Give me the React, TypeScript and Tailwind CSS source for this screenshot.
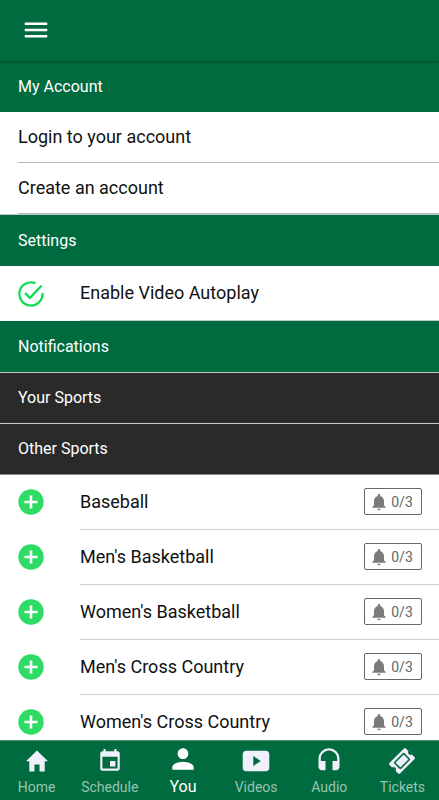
import React, { useState } from "react";
import { MdEvent, MdHeadset, MdMenu, MdNotifications, MdPerson } from "react-icons/md";

const sports = [
  "Baseball",
  "Men's Basketball",
  "Women's Basketball",
  "Men's Cross Country",
  "Women's Cross Country",
];

const HomeIcon = () => (
  <svg viewBox="0 0 26 26" className="size-[26px]" fill="currentColor" aria-hidden="true">
    <path d="M10.5 23.5v-7h5v7h5.2V13.300H24L13 2.500 2 13.300h3.300v10.200z" />
  </svg>
);

const VideoIcon = () => (
  <svg viewBox="0 0 28 24" className="h-6 w-7" fill="currentColor" aria-hidden="true">
    <path
      fillRule="evenodd"
      d="M4.5 1.8h19a3.8 3.8 0 0 1 3.8 3.8v12.9a3.8 3.8 0 0 1-3.8 3.8h-19a3.8 3.8 0 0 1-3.8-3.8V5.6a3.8 3.8 0 0 1 3.8-3.8zM11.3 7v10l7.4-5z"
    />
  </svg>
);

const TicketIcon = () => (
  <svg viewBox="0 0 28 28" className="size-7" aria-hidden="true">
    <g transform="rotate(-45 14 14)">
      <path
        fill="currentColor"
        d="M4 6.5h20a1.6 1.6 0 0 1 1.6 1.6v3.4a2.6 2.6 0 0 0 0 5v3.4a1.6 1.6 0 0 1-1.6 1.6H4a1.6 1.6 0 0 1-1.6-1.6v-3.4a2.6 2.6 0 0 0 0-5V8.1A1.6 1.6 0 0 1 4 6.5z"
      />
      <rect x="7.5" y="9.8" width="13" height="8.4" rx="0.6" fill="none" stroke="#006b3f" strokeWidth="1.5" />
    </g>
  </svg>
);

const tabs = [
  { label: "Home", icon: <HomeIcon /> },
  { label: "Schedule", icon: <MdEvent className="size-[26px]" /> },
  { label: "You", icon: <MdPerson className="size-8" />, active: true },
  { label: "Videos", icon: <VideoIcon /> },
  { label: "Audio", icon: <MdHeadset className="size-7" /> },
  { label: "Tickets", icon: <TicketIcon /> },
];

function SectionTitle({ children, dark = false }: { children: React.ReactNode; dark?: boolean }) {
  return (
    <h2
      className={`flex h-[51px] items-center px-[18px] text-base text-white ${
        dark ? "border-t border-[#c4c8ca] bg-[#2a2a2a]" : "bg-[#006b3f]"
      }`}
    >
      {children}
    </h2>
  );
}

export default function App() {
  const [autoplay, setAutoplay] = useState(true);

  return (
    <div className="flex h-screen flex-col bg-white font-['Roboto',sans-serif] text-[#111]">
      <header className="z-10 flex h-[61px] shrink-0 items-center border-b border-transparent bg-[#006b3f] px-[21px] text-white shadow-[0_1px_2px_rgba(0,0,0,0.3)]">
        <button type="button" aria-label="Menu">
          <MdMenu className="size-[30px]" />
        </button>
      </header>

      <main className="min-h-0 flex-1 overflow-y-auto [scrollbar-width:none]">
        <SectionTitle>My Account</SectionTitle>
        <div className="border-b border-[#c4c8ca] pl-[18px] text-lg">
          <a href="#login" className="flex h-[51px] items-center border-b border-[#b2b7ba]">
            Login to your account
          </a>
          <a href="#create" className="flex h-[51px] items-center border-b border-[#b2b7ba]">
            Create an account
          </a>
        </div>

        <SectionTitle>Settings</SectionTitle>
        <label className="flex h-[55px] items-center pl-[18px] text-lg">
          <input
            type="checkbox"
            className="sr-only"
            checked={autoplay}
            onChange={(e) => setAutoplay(e.target.checked)}
          />
          <svg
            viewBox="0 0 26 26"
            className="mr-9 size-[26px] shrink-0 text-[#12db58]"
            fill="none"
            stroke="currentColor"
            strokeWidth="2.3"
            strokeLinecap="round"
            strokeLinejoin="round"
            aria-hidden="true"
          >
            <path d="M16.6 1.9A11.6 11.6 0 1 0 24.6 13" />
            {autoplay && <path d="M7.700 12.600l4.300 4.300L23 5.200" />}
          </svg>
          <span className="flex h-full flex-1 items-center border-b border-[#c4c8ca]">Enable Video Autoplay</span>
        </label>

        <SectionTitle>Notifications</SectionTitle>
        <div className="border-b border-[#8a8a8a]">
          <SectionTitle dark>Your Sports</SectionTitle>
          <SectionTitle dark>Other Sports</SectionTitle>
        </div>

        <ul>
          {sports.map((sport) => (
            <li key={sport} className="flex h-[55px] items-center pl-[18px] text-lg">
              <button type="button" aria-label={`Add ${sport}`} className="mr-9 shrink-0 pb-0.5">
                <svg viewBox="0 0 26 26" className="size-[26px]" aria-hidden="true">
                  <circle cx="13" cy="13" r="12.7" fill="#2edb64" />
                  <path d="M13 6.500v13M6.500 13h13" stroke="#fff" strokeWidth="2.6" />
                </svg>
              </button>
              <div className="flex h-full flex-1 items-center justify-between border-b border-[#cdd1d1] pr-[17px] pb-px">
                <span>{sport}</span>
                <button
                  type="button"
                  aria-label={`Alerts for ${sport}, 0/3`}
                  className="flex h-[27px] w-[58px] items-center justify-center gap-0.5 rounded-[2px] border border-[#666] pr-1 text-sm text-[#666]"
                >
                  <MdNotifications className="size-5 text-[#7a7a7a]" />
                  0/3
                </button>
              </div>
            </li>
          ))}
        </ul>
      </main>

      <nav className="flex h-[60px] shrink-0 border-t border-[#5d8a72] bg-[#006b3f]">
        {tabs.map((tab) => (
          <a
            key={tab.label}
            href={`#${tab.label.toLowerCase()}`}
            aria-current={tab.active ? "page" : undefined}
            className={`flex min-w-0 flex-1 flex-col items-center ${
              tab.active ? "text-base text-white" : "text-sm text-[#98c4af]"
            }`}
          >
            <span className={`flex h-9 items-center ${tab.active ? "text-white" : "pt-1 text-[#f0effc]"}`}>
              {tab.icon}
            </span>
            <span className="leading-5">{tab.label}</span>
          </a>
        ))}
      </nav>
    </div>
  );
}
